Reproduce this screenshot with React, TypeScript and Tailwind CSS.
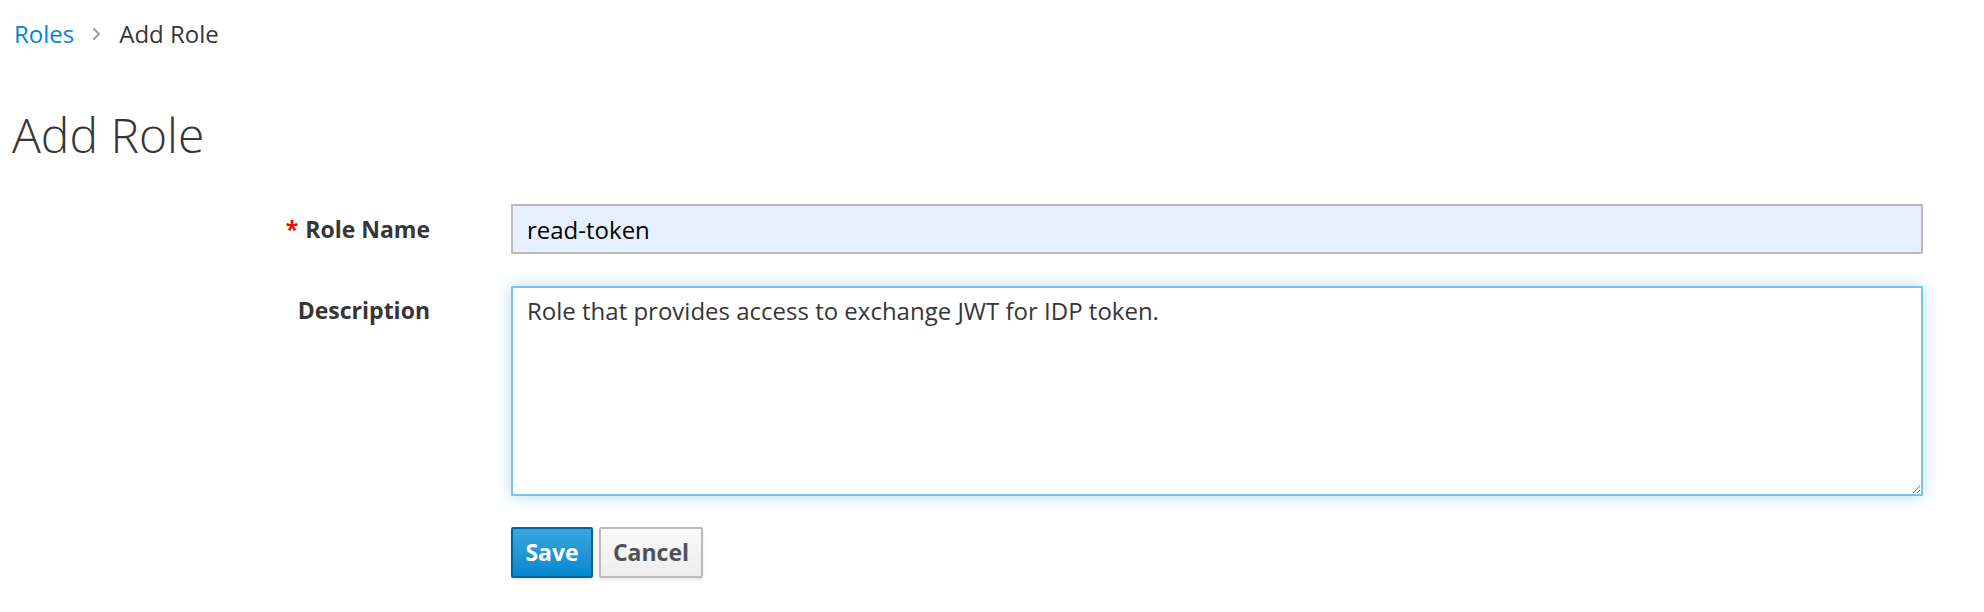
import React from "react";

export default function App() {
  return (
    <div className="w-full h-[612px] bg-white text-[#363636] font-['Open_Sans',sans-serif] overflow-hidden">
      <nav className="pt-[18px] pl-[14px] flex items-center text-[24px] leading-[32px]">
        <a className="text-[#0088ce] no-underline">Roles</a>
        <span className="ml-[18px] mr-[18px] flex items-center">
          <svg width="9" height="14" viewBox="0 0 9 14">
            <path d="M1.5 1.5 L7 7 L1.5 12.5" fill="none" stroke="#9c9c9c" strokeWidth="2" />
          </svg>
        </span>
        <span className="text-[#363636]">Add Role</span>
      </nav>
      <h1 className="mt-[58px] pl-[12px] text-[48px] leading-[53px] font-light text-[#363636]">Add Role</h1>
      <form className="mt-[43px] flex flex-col gap-[32px]" onSubmit={(e) => e.preventDefault()}>
        <div className="flex">
          <label className="w-[430px] h-[50px] flex items-center justify-end text-[23px] font-bold text-[#363636]">
            <span className="text-[#ff0000] mr-[7px]">*</span>
            Role Name
          </label>
          <input
            readOnly
            value="read-token"
            className="ml-[81px] w-[1412px] h-[50px] border-2 border-[#bbbbbb] bg-[#e6effd] px-[14px] text-[24px] text-[#000] outline-none rounded-[1px]"
          />
        </div>
        <div className="flex">
          <label className="w-[430px] pt-[8px] text-right text-[23px] leading-[32px] font-bold text-[#363636]">
            Description
          </label>
          <textarea
            readOnly
            value="Role that provides access to exchange JWT for IDP token."
            className="ml-[81px] w-[1412px] h-[210px] border-2 border-[#7dc3e8] bg-white px-[14px] pt-[7px] text-[24px] leading-[32px] text-[#363636] outline-none shadow-[0_0_16px_rgba(125,195,232,0.6)] rounded-[1px]"
          />
        </div>
        <div className="flex pl-[511px] gap-[6px] -mt-[1px]">
          <button className="h-[51px] w-[82px] rounded-[2px] border-2 border-[#00659c] bg-gradient-to-b from-[#39a5dc] to-[#0088ce] text-white text-[23px] font-bold shadow-[0_2px_3px_rgba(3,3,3,0.1)]">
            Save
          </button>
          <button className="h-[51px] w-[104px] rounded-[2px] border-2 border-[#bbbbbb] bg-gradient-to-b from-[#fafafa] to-[#ededed] text-[#4d5258] text-[23px] font-bold shadow-[0_2px_3px_rgba(3,3,3,0.1)]">
            Cancel
          </button>
        </div>
      </form>
    </div>
  );
}
